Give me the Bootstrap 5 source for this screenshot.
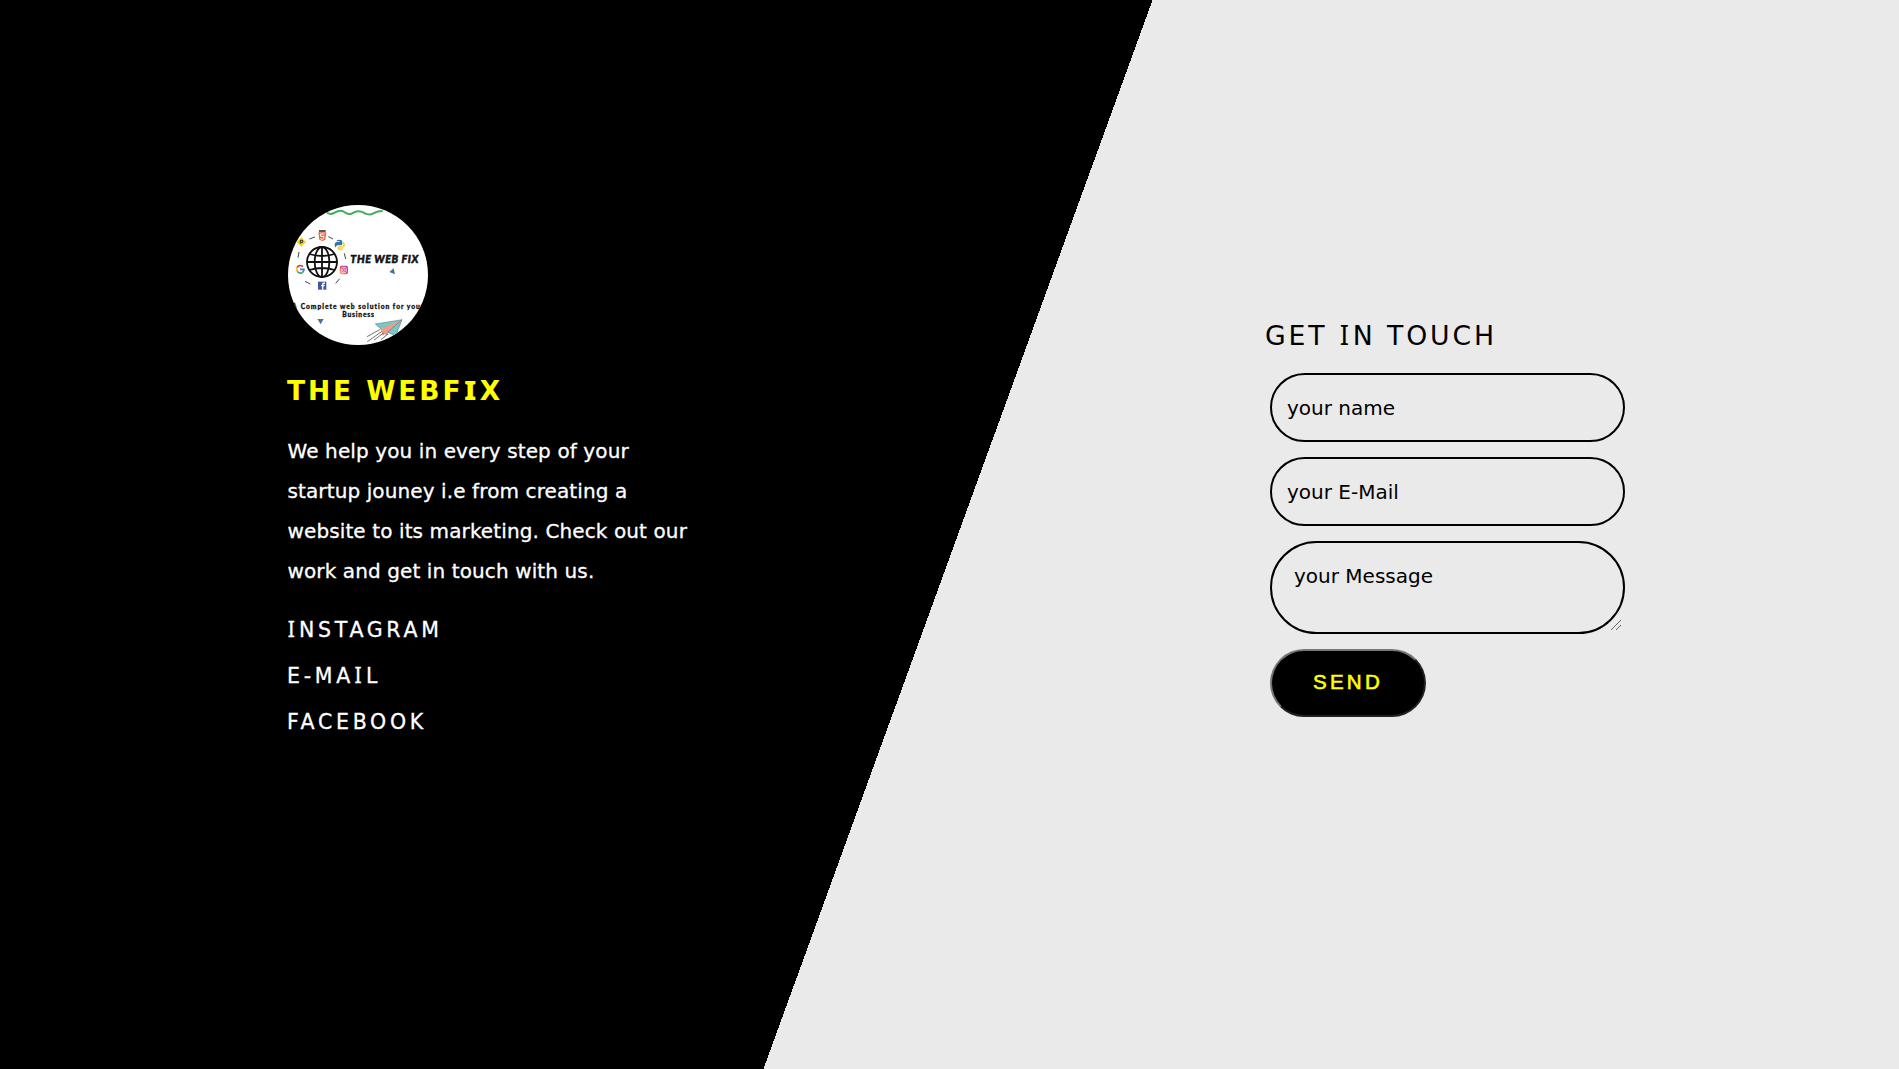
<!DOCTYPE html>
<html lang="en">
<head>
<meta charset="utf-8">
<meta name="viewport" content="width=device-width, initial-scale=1">
<title>The WebFix</title>
<link href="https://cdn.jsdelivr.net/npm/bootstrap@5.3.0/dist/css/bootstrap.min.css" rel="stylesheet">
<style>
body{font-family:"DejaVu Sans",Verdana,sans-serif;color:#000;background:#eaeaea}
.split{min-height:100vh;background:linear-gradient(110deg,#000 calc(50% + 8px),#eaeaea calc(50% + 8px))}
.about{padding:205px 0 0 287px;width:1265px;color:#fff;flex:none}
.logo{width:140px;height:140px;margin-left:1px}
.slab{font-family:"Noto Sans",sans-serif;line-height:1;font-size:1.02em;padding:0 .03em}
.brand{font-size:26.500px;line-height:40px;font-weight:700;letter-spacing:2.9px;color:#ff0;margin:26px 0 20px}
.brand .slab{font-weight:900}
.intro{font-size:20px;line-height:40px;letter-spacing:.11px;-webkit-text-stroke:.3px #fff;padding-left:.5px}
.socials a{font-size:20.500px;line-height:46px;letter-spacing:3.7px;color:#fff;-webkit-text-stroke:.3px #fff}
.contact{padding-top:316px;width:361px}
.touch{font-size:26.700px;line-height:40px;font-weight:400;letter-spacing:2.9px;margin:0 0 17px}
.fields{padding-left:5px;gap:15px}
.fields .form-control{background:transparent;border:2px solid #000;border-radius:35px;width:355px;height:69px;padding:0 15px;color:#000;font-size:20px;line-height:30px}
.fields textarea.form-control{height:93px;min-height:0;border-radius:47px;padding:18px 22px;resize:none;overflow:hidden}
.fields .form-control::placeholder{color:#000;opacity:1}
.grip{right:4px;bottom:4px}
.send{width:156px;height:68px;border:2px solid;border-color:#767676 #212121 #212121 #767676!important;border-radius:34px;background:#000!important;color:#ff0!important;font-family:"Liberation Sans",Arial,sans-serif;font-weight:400;-webkit-text-stroke:.6px #ff0;font-size:20.500px;letter-spacing:3.300px;padding:0 0 2px}
</style>
</head>
<body>
<main class="split d-flex align-items-start overflow-hidden">
<section class="about">
<svg class="logo d-block" viewBox="24 30 420 420" role="img" aria-label="The Web Fix">
<defs><clipPath id="disc"><circle cx="234" cy="240" r="210"/></clipPath></defs>
<g clip-path="url(#disc)">
<rect x="24" y="30" width="420" height="420" fill="#fff"/>
<path d="M136 48q12 15 28 5t29-2q14 12 29 1 18-8 34 4 14 5 24-1 12-7 28-7" fill="none" stroke="#41ae5e" stroke-width="6"/>
<g fill="none" stroke="#111" stroke-width="5.500"><circle cx="126" cy="201" r="45"/><ellipse cx="126" cy="201" rx="22" ry="45"/><path d="M126 155v92M80 201h92M88 177q38 12 76 0M88 225q38-12 76 0"/></g>
<g stroke="#444" stroke-width="3"><path d="M88 132l17-6M145 125l14 7M57 171l-3 17M193 175l4 17M75 259l16 8M179 251l-12 14"/></g>
<path d="M117 106h20v4h-20z" fill="#222"/><path d="M115 112h24l-3 22-9 4-9-4z" fill="#ee6238"/><path d="M134 117h-13l1 7h10l-1 7-5 2-5-2" fill="none" stroke="#fff" stroke-width="3"/>
<path d="M64 127l14 14-14 14-14-14z" fill="#f3d414"/><path d="M61 146v-10h7v6h-7" fill="none" stroke="#333" stroke-width="3"/>
<path d="M164 150q0-9 7-9h8v-2h-10q0-5 8-5 10 0 10 7v5q0 5-6 5h-8q-5 0-5 6h-2q-2-3-2-7z" fill="#3973a6"/><path d="M189 141q7 0 6 11-1 6-6 6h-9v2h9q0 6-9 6-8 0-8-7 0-6 6-6h6q5 0 5-6z" fill="#f8d44d"/>
<g fill="none" stroke-width="5"><path d="M69 215a11 11 0 0 0-18 3" stroke="#e44136"/><path d="M51 218a11 11 0 0 0 1 11" stroke="#f6bd20"/><path d="M52 229a11 11 0 0 0 16 3" stroke="#3aa657"/><path d="M60 223h12q0 6-4 9" stroke="#477fe2"/></g>
<defs><linearGradient id="insta" x1="0" y1="1" x2="1" y2="0"><stop stop-color="#ffcd50"/><stop offset=".5" stop-color="#e83d6e"/><stop offset="1" stop-color="#8747d5"/></linearGradient></defs>
<rect x="179" y="212" width="25" height="26" rx="6" fill="url(#insta)"/><rect x="184" y="217" width="15" height="16" rx="4" fill="none" stroke="#fff" stroke-width="2"/><circle cx="191.500" cy="225" r="4" fill="none" stroke="#fff" stroke-width="2"/>
<rect x="114" y="260" width="25" height="24" fill="#3e5999"/><path d="M128 284v-15q0-5 7-5M123 272h11" fill="none" stroke="#fff" stroke-width="4"/>
<g font-family="Lato, sans-serif" font-weight="900" fill="#111" stroke="#111">
<text x="211" y="205" font-size="32" font-style="italic" stroke-width="1.500" textLength="204">THE WEB FIX</text>
<g font-size="20" stroke-width=".8" style="font-variant-ligatures:none"><text x="36" y="341">A</text><text x="62" y="341" textLength="368">Complete web solution for your</text><text x="187" y="367" textLength="95">Business</text></g></g>
<path d="M341 220l4 18-17-7z" fill="#44719d"/><path d="M112 372h19l-9 16z" fill="#44719d"/>
<path d="M366 374l-80 13 17 15 15 17z" fill="#78c8c6" stroke="#567" stroke-width="1.500"/><path d="M366 374l-63 28 5 20 15-10z" fill="#f49a87"/><path d="M366 374l-43 38 24 11z" fill="#78c8c6" stroke="#567" stroke-width="1.500"/>
<path d="M301 403l-40 22M306 409l-44 31M311 414l-29 21M324 417l-21 17" fill="none" stroke="#555" stroke-width="2.500"/>
</g>
</svg>
<h1 class="brand">THE WEBF<span class="slab">I</span>X</h1>
<p class="intro mb-0">We help you in every step of your<br>startup jouney i.e from creating a<br>website to its marketing. Check out our<br>work and get in touch with us.</p>
<nav class="socials d-flex flex-column align-items-start mt-3">
<a class="text-decoration-none" href="#"><span class="slab">I</span>NSTAGRAM</a>
<a class="text-decoration-none" href="#">E-MA<span class="slab">I</span>L</a>
<a class="text-decoration-none" href="#">FACEBOOK</a>
</nav>
</section>
<section class="contact">
<h2 class="touch">GET <span class="slab">I</span>N TOUCH</h2>
<form class="fields d-flex flex-column align-items-start">
<input class="form-control" type="text" placeholder="your name">
<input class="form-control" type="email" placeholder="your E-Mail">
<div class="position-relative d-flex">
<textarea class="form-control" placeholder="your Message"></textarea>
<svg class="grip position-absolute" width="10" height="10" viewBox="0 0 10 10" stroke="#555" stroke-width=".9"><path d="M0 10L10 0M5 10l5-5"/></svg>
</div>
<button class="btn send" type="button">SEND</button>
</form>
</section>
</main>
<script src="https://cdn.jsdelivr.net/npm/bootstrap@5.3.0/dist/js/bootstrap.bundle.min.js"></script>
</body>
</html>
